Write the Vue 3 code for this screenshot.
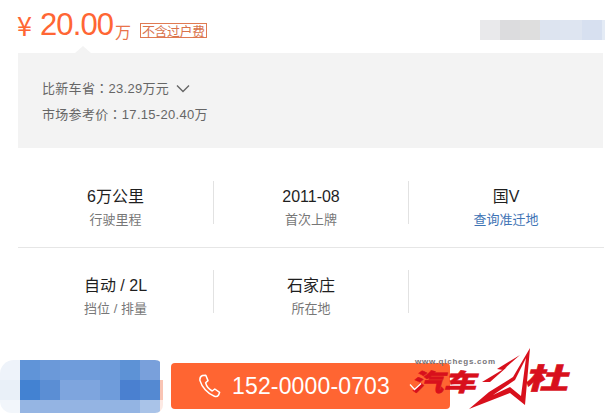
<script setup>
const specs = [
  [
    { value: '6万公里', label: '行驶里程' },
    { value: '2011-08', label: '首次上牌' },
    { value: '国V', label: '查询准迁地', link: true },
  ],
  [
    { value: '自动 / 2L', label: '挡位 / 排量' },
    { value: '石家庄', label: '所在地' },
    { value: '', label: '' },
  ],
]

const topMosaic = ['#e9e9eb', '#dcdcde', '#dedede', '#dde4f0', '#dee5f1', '#d7e0f0', '#e4ebf5']
const topWidths = [20, 20, 20, 20, 22, 20, 3]

const blur = [
  ['#eef3fa', '#6094d8', '#6b99d9', '#6f9cdb', '#6f9cdb', '#6d9bda', '#5d92d6', '#79a0db', '#fff'],
  ['#e9f0f8', '#4382d2', '#5b8ed4', '#7ea5de', '#7ea5de', '#6f9cdb', '#4a80d0', '#5489d2', '#f9c4b4'],
  ['#f2f6fb', '#95b5e3', '#94b4e3', '#94b4e3', '#94b4e3', '#93b4e3', '#93b4e3', '#a9c3e8', '#fde9e3'],
]
</script>

<template>
  <div class="page">
    <div class="price-row">
      <span class="yen">¥</span>
      <span class="amount">20.00</span>
      <span class="unit">万</span>
      <span class="fee-tag">不含过户费</span>
      <div class="top-mosaic">
        <i
          v-for="(c, i) in topMosaic"
          :key="i"
          :style="{ background: c, width: topWidths[i] + 'px' }"
        ></i>
      </div>
    </div>

    <div class="saving">
      <span class="saving-arrow"></span>
      <div class="saving-line">
        <span>比新车省<span class="colon">：</span>23.29万元</span>
        <svg class="chevron" width="14" height="9" viewBox="0 0 14 9">
          <path d="M1 1.5 7 7.5 13 1.5" fill="none" stroke="#666" stroke-width="1.4" />
        </svg>
      </div>
      <div class="saving-line">
        <span>市场参考价<span class="colon">：</span>17.15-20.40万</span>
      </div>
    </div>

    <div class="specs">
      <div v-for="(row, r) in specs" :key="r" class="spec-row">
        <div v-for="(s, i) in row" :key="i" class="spec">
          <div class="spec-value">{{ s.value }}</div>
          <div class="spec-label" :class="{ link: s.link }">{{ s.label }}</div>
        </div>
      </div>
    </div>

    <div class="bottom">
      <div class="blur-box">
        <div v-for="(row, r) in blur" :key="r" class="blur-row">
          <i v-for="(c, i) in row" :key="i" :style="{ background: c }"></i>
        </div>
      </div>
      <div class="call">
        <svg class="phone" width="23" height="24" viewBox="0 0 23 24">
          <path
            d="M4.5 1.5 7.8 1.2 10 6.6 7.6 8.8C8.4 11.8 11 15.4 14.2 17L16.8 15 21.6 18.4 20.6 21C19.8 22.2 18 22.8 16.4 22.2 9.6 19.8 3.6 12.6 2 6.6 1.6 4.4 2.6 2.4 4.5 1.5Z"
            fill="none"
            stroke="#fff"
            stroke-width="1.5"
            stroke-linejoin="round"
          />
        </svg>
        <span class="number">152-0000-0703</span>
        <svg class="call-arrow" width="13" height="8" viewBox="0 0 13 8">
          <path d="M1 1.5 5.5 6.5 12 .5" fill="none" stroke="#fff" stroke-width="1.3" />
        </svg>
      </div>

      <div class="watermark">
        <span class="wm-url">www.qichegs.com</span>
        <span class="wm-left">汽车</span>
        <svg class="wm-star" width="64" height="64" viewBox="0 0 64 64">
          <path
            d="M61 1 56 58 41 46 0 62 20 45 44 30Z M57 11 46 33 24 48 41 40 52 49Z"
            fill="#d8101c"
            fill-rule="evenodd"
          />
          <path d="M28 22 51 8 34 23Z M13 35 38 20 21 35Z" fill="#d8101c" />
        </svg>
        <span class="wm-right">杜</span>
      </div>
    </div>
  </div>
</template>

<style scoped>
.page {
  position: relative;
  width: 605px;
  height: 416px;
  overflow: hidden;
  background: #fff;
  font-family: "Liberation Sans", "Noto Sans CJK SC", sans-serif;
  color: #222;
}

.price-row {
  height: 53px;
  padding-left: 17px;
  display: flex;
  align-items: flex-start;
  color: #ff6634;
  position: relative;
}
.yen {
  font-size: 27px;
  line-height: 30px;
  margin-top: 10px;
  font-family: "Noto Sans CJK SC", sans-serif;
  margin-right: 8px;
}
.amount {
  font-size: 31px;
  line-height: 30px;
  margin-top: 10px;
  letter-spacing: -0.9px;
}
.unit {
  font-size: 16px;
  line-height: 18px;
  margin-top: 22px;
  margin-left: 2px;
  color: #e9734a;
  font-family: "Noto Sans CJK SC", sans-serif;
}
.fee-tag {
  margin-top: 23px;
  margin-left: 9px;
  border: 1px solid #e07a52;
  font-size: 13px;
  line-height: 13px;
  height: 13px;
  padding: 0 1px;
  color: #d9734c;
  font-family: "Noto Sans CJK SC", sans-serif;
  letter-spacing: -0.5px;
}
.top-mosaic {
  position: absolute;
  left: 480px;
  top: 20px;
  height: 20px;
  display: flex;
}
.top-mosaic i {
  display: block;
  height: 100%;
}

.saving {
  position: relative;
  margin-left: 18px;
  width: 585px;
  height: 95px;
  background: #f3f3f3;
  padding: 22px 0 0 24px;
  box-sizing: border-box;
  font-size: 13px;
  letter-spacing: 0.3px;
  color: #666;
}
.colon {
  font-family: "Noto Sans CJK TC", sans-serif;
}
.saving-arrow {
  position: absolute;
  left: 57px;
  top: -7px;
  width: 0;
  height: 0;
  border-left: 8px solid transparent;
  border-right: 8px solid transparent;
  border-bottom: 7px solid #f3f3f3;
}
.saving-line {
  height: 26px;
  line-height: 24px;
  display: flex;
  align-items: center;
}
.chevron {
  margin-left: 7px;
}

.specs {
  padding: 33px 1px 0 18px;
}
.spec-row {
  display: flex;
  height: 66px;
  margin-bottom: 23px;
}
.spec-row:first-child {
  border-bottom: 1px solid #e6e6e6;
  margin-bottom: 22px;
}
.spec {
  width: 195px;
  height: 43px;
  text-align: center;
  border-right: 1px solid #e2e2e2;
  box-sizing: border-box;
}
.spec:first-child {
  width: 196px;
}
.spec:last-child {
  width: 194px;
  border-right: none;
}
.spec-value {
  font-size: 16px;
  line-height: 20px;
  margin-top: 6px;
  color: #1f1f1f;
}
.spec-label {
  font-size: 13px;
  line-height: 18px;
  margin-top: 4px;
  color: #777;
}
.spec-label.link {
  color: #3f74b5;
}

.bottom {
  position: absolute;
  left: 0;
  top: 360px;
  display: flex;
  align-items: flex-start;
}
.blur-box {
  width: 163px;
  height: 53px;
  border-radius: 14px 8px 8px 12px;
  overflow: hidden;
}
.blur-row {
  display: grid;
  grid-template-columns: repeat(8, 20px) 3px;
  height: 20px;
}
.blur-row:last-child {
  height: 13px;
}
.blur-row i {
  display: block;
}
.call {
  margin: 3px 0 0 8px;
  width: 279px;
  height: 46px;
  border-radius: 4px;
  background: #ff6532;
  color: #fff;
  display: flex;
  align-items: center;
  padding-left: 27px;
  box-sizing: border-box;
}
.phone {
  margin-right: 11px;
}
.number {
  font-size: 23px;
  letter-spacing: 0.15px;
}
.call-arrow {
  position: relative;
  z-index: 2;
  margin-left: 19px;
  margin-top: 2px;
}

.watermark {
  position: absolute;
  left: 415px;
  top: -15px;
  width: 190px;
  height: 70px;
  color: #d8101c;
  font-family: "Noto Sans CJK SC", sans-serif;
  font-weight: 900;
  -webkit-text-stroke: 0.5px #d8101c;
}
.wm-url {
  position: absolute;
  left: 0;
  top: 12px;
  font-family: "Liberation Sans", sans-serif;
  font-size: 8px;
  line-height: 10px;
  font-weight: 700;
  letter-spacing: 0.75px;
  color: #77757a;
  -webkit-text-stroke: 0;
}
.wm-left {
  position: absolute;
  left: 3px;
  top: 22px;
  font-size: 24px;
  line-height: 28px;
  transform: scaleX(1.35) skewX(-12deg);
  transform-origin: left top;
}
.wm-star {
  position: absolute;
  left: 54px;
  top: 2px;
}
.wm-right {
  position: absolute;
  left: 117px;
  top: 15px;
  font-size: 29px;
  line-height: 32px;
  transform: scaleX(1.5) skewX(-10deg);
  transform-origin: left top;
}
</style>
